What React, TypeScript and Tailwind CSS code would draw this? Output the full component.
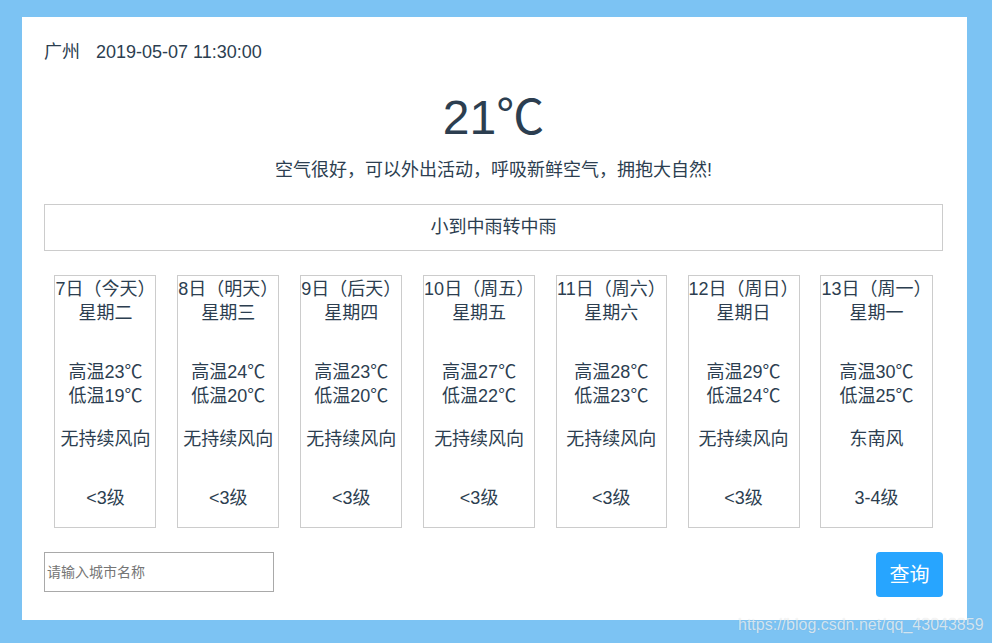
const days = [
  { d: "7日（今天）", w: "星期二", hi: "23", lo: "19", dir: "无持续风向", lv: "<3级" },
  { d: "8日（明天）", w: "星期三", hi: "24", lo: "20", dir: "无持续风向", lv: "<3级" },
  { d: "9日（后天）", w: "星期四", hi: "23", lo: "20", dir: "无持续风向", lv: "<3级" },
  { d: "10日（周五）", w: "星期五", hi: "27", lo: "22", dir: "无持续风向", lv: "<3级" },
  { d: "11日（周六）", w: "星期六", hi: "28", lo: "23", dir: "无持续风向", lv: "<3级" },
  { d: "12日（周日）", w: "星期日", hi: "29", lo: "24", dir: "无持续风向", lv: "<3级" },
  { d: "13日（周一）", w: "星期一", hi: "30", lo: "25", dir: "东南风", lv: "3-4级" },
];

const font = { fontFamily: '"Liberation Sans", "Noto Sans CJK SC", sans-serif' };

export default function App() {
  return (
    <div
      className="relative min-h-screen bg-[#7cc3f3] pl-[22px] pt-[17px] text-[#2c3e50]"
      style={font}
    >
      <div className="h-[603px] w-[945px] bg-white pl-[22px] pr-[24px] pt-[23px]">
        <div className="flex gap-4 text-[18px] leading-6">
          <span>广州</span>
          <span>2019-05-07 11:30:00</span>
        </div>

        <div className="mt-[24px] text-center text-[48px] leading-[60px]">21℃</div>
        <p className="mt-[10px] text-center text-[18px] leading-6">
          空气很好，可以外出活动，呼吸新鲜空气，拥抱大自然!
        </p>

        <div className="mt-[22px] flex h-[47px] items-center justify-center border border-[#cccccc] text-[18px]">
          小到中雨转中雨
        </div>

        <div className="mt-[24px] flex justify-around">
          {days.map((x) => (
            <div
              key={x.d}
              className="h-[253px] border border-[#cccccc] pt-[1px] text-center text-[18px] leading-6"
            >
              <p>{x.d}</p>
              <p>{x.w}</p>
              <p className="mt-[35px]">高温{x.hi}℃</p>
              <p>低温{x.lo}℃</p>
              <p className="mt-[19px]">{x.dir}</p>
              <p className="mt-[35px]">{x.lv}</p>
            </div>
          ))}
        </div>

        <div className="mt-[24px] flex items-start justify-between">
          <input
            className="h-[40px] w-[230px] border border-[#a9a9a9] px-[2px] text-[14px] outline-none placeholder:text-[#757575]"
            placeholder="请输入城市名称"
          />
          <button className="h-[45px] w-[67px] rounded-[4px] bg-[#27a5ff] text-[20px] text-white">
            查询
          </button>
        </div>
      </div>

      <span className="absolute left-[738px] top-[613px] text-[16px] text-white/70 [text-shadow:0_0_1px_rgba(0,0,0,0.15)]">
        https://blog.csdn.net/qq_43043859
      </span>
    </div>
  );
}
